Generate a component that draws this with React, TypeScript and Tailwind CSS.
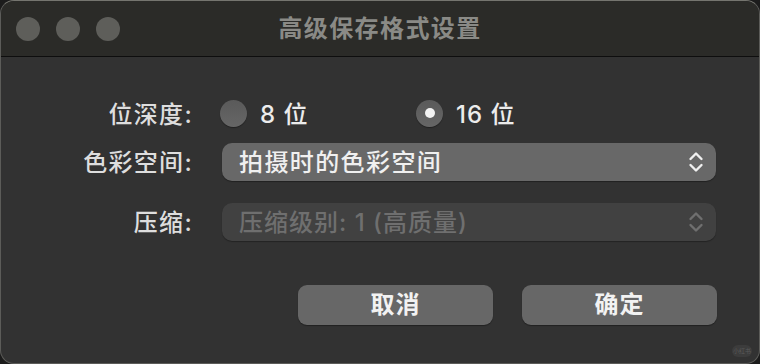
import React from "react";

const font = { fontFamily: '"Inter", "Noto Sans CJK SC", sans-serif' };

function Chevrons({ color }: { color: string }) {
  return (
    <svg width="16" height="22" viewBox="0 0 16 22" fill="none">
      <path d="M2.5 8 L8 2.5 L13.5 8" stroke={color} strokeWidth="2.4" strokeLinecap="round" strokeLinejoin="round" />
      <path d="M2.5 14 L8 19.5 L13.5 14" stroke={color} strokeWidth="2.4" strokeLinecap="round" strokeLinejoin="round" />
    </svg>
  );
}

function Radio({ checked }: { checked?: boolean }) {
  return (
    <div className="w-[27px] h-[27px] rounded-full bg-gradient-to-b from-[#5a5a5a] to-[#666666] shadow-[0_1px_1px_rgba(0,0,0,0.35)] flex items-center justify-center shrink-0">
      {checked && <div className="w-[10px] h-[10px] rounded-full bg-[#f2f2f2]" />}
    </div>
  );
}

export default function App() {
  return (
    <div className="w-[760px] h-[364px] bg-[#1c1c1c]" style={font}>
      <div className="relative w-[760px] h-[364px] rounded-[14px] overflow-hidden border border-[#5c5c59] border-t-[#75756f] bg-[#323232] flex flex-col">
        {/* Title bar */}
        <div className="h-[55px] bg-[#2b2b28] flex items-center relative shrink-0">
          <div className="flex gap-[16px] pl-[15px] pt-[1px]">
            <div className="w-[24px] h-[24px] rounded-full bg-[#5e5e5a]" />
            <div className="w-[24px] h-[24px] rounded-full bg-[#5e5e5a]" />
            <div className="w-[24px] h-[24px] rounded-full bg-[#5e5e5a]" />
          </div>
          <div className="absolute inset-0 flex items-center justify-center pt-[1px]">
            <span className="text-[24px] font-bold text-[#8a8a86] tracking-[1.4px]">高级保存格式设置</span>
          </div>
        </div>
        <div className="h-[1px] bg-[#0e0e0e] shrink-0" />

        {/* Body */}
        <div className="flex flex-col pt-[42px] text-[#dedede]">
          {/* Row 1 */}
          <div className="flex items-center h-[28px]">
            <div className="w-[192px] text-right text-[24px] font-medium tracking-[1.3px] leading-none pt-[3px]">位深度:</div>
            <div className="ml-[27px] flex items-center">
              <div className="w-[196px] flex items-center gap-[13px]">
                <Radio />
                <span className="text-[24px] font-medium tracking-[1px] text-[#ececec] leading-none pt-[3px]">8 位</span>
              </div>
              <div className="flex items-center gap-[13px]">
                <Radio checked />
                <span className="text-[24px] font-medium tracking-[1px] text-[#ececec] leading-none pt-[3px]">16 位</span>
              </div>
            </div>
          </div>

          {/* Row 2 */}
          <div className="flex items-center mt-[16px] h-[38px]">
            <div className="w-[192px] text-right text-[24px] font-medium tracking-[1.3px] leading-none pt-[1px]">色彩空间:</div>
            <div className="ml-[29px] w-[494px] h-[38px] rounded-[10px] bg-[#686868] shadow-[0_1px_1px_rgba(0,0,0,0.35)] flex items-center justify-between pl-[17px] pr-[12px]">
              <span className="text-[24px] font-medium tracking-[1.4px] text-[#f0f0f0] leading-none pt-[1px]">拍摄时的色彩空间</span>
              <Chevrons color="#f0f0f0" />
            </div>
          </div>

          {/* Row 3 */}
          <div className="flex items-center mt-[22px] h-[38px]">
            <div className="w-[192px] text-right text-[24px] font-medium tracking-[1.3px] leading-none pt-[1px]">压缩:</div>
            <div className="ml-[29px] w-[494px] h-[38px] rounded-[10px] bg-[#414141] shadow-[0_1px_1px_rgba(0,0,0,0.3)] flex items-center justify-between pl-[17px] pr-[12px]">
              <span className="text-[24px] font-medium tracking-[1px] text-[#6f6f6f] leading-none pt-[1px]">压缩级别: 1 (高质量)</span>
              <Chevrons color="#6f6f6f" />
            </div>
          </div>

          {/* Buttons */}
          <div className="flex mt-[44px] pl-[297px] gap-[29px]">
            <button className="w-[195px] h-[40px] rounded-[9px] bg-[#676767] shadow-[0_1px_1px_rgba(0,0,0,0.35)] text-[24px] font-semibold text-[#f2f2f2] tracking-[1px] leading-none">
              取消
            </button>
            <button className="w-[195px] h-[40px] rounded-[9px] bg-[#676767] shadow-[0_1px_1px_rgba(0,0,0,0.35)] text-[24px] font-semibold text-[#f2f2f2] tracking-[1px] leading-none">
              确定
            </button>
          </div>
        </div>

        {/* watermark */}
        <div className="absolute right-[7px] bottom-[6px] w-[20px] h-[12px] rounded-full bg-[#3c3c3c] flex items-center justify-center">
          <span className="text-[6px] text-[#5a5a5a] leading-none">小红书</span>
        </div>
      </div>
    </div>
  );
}
